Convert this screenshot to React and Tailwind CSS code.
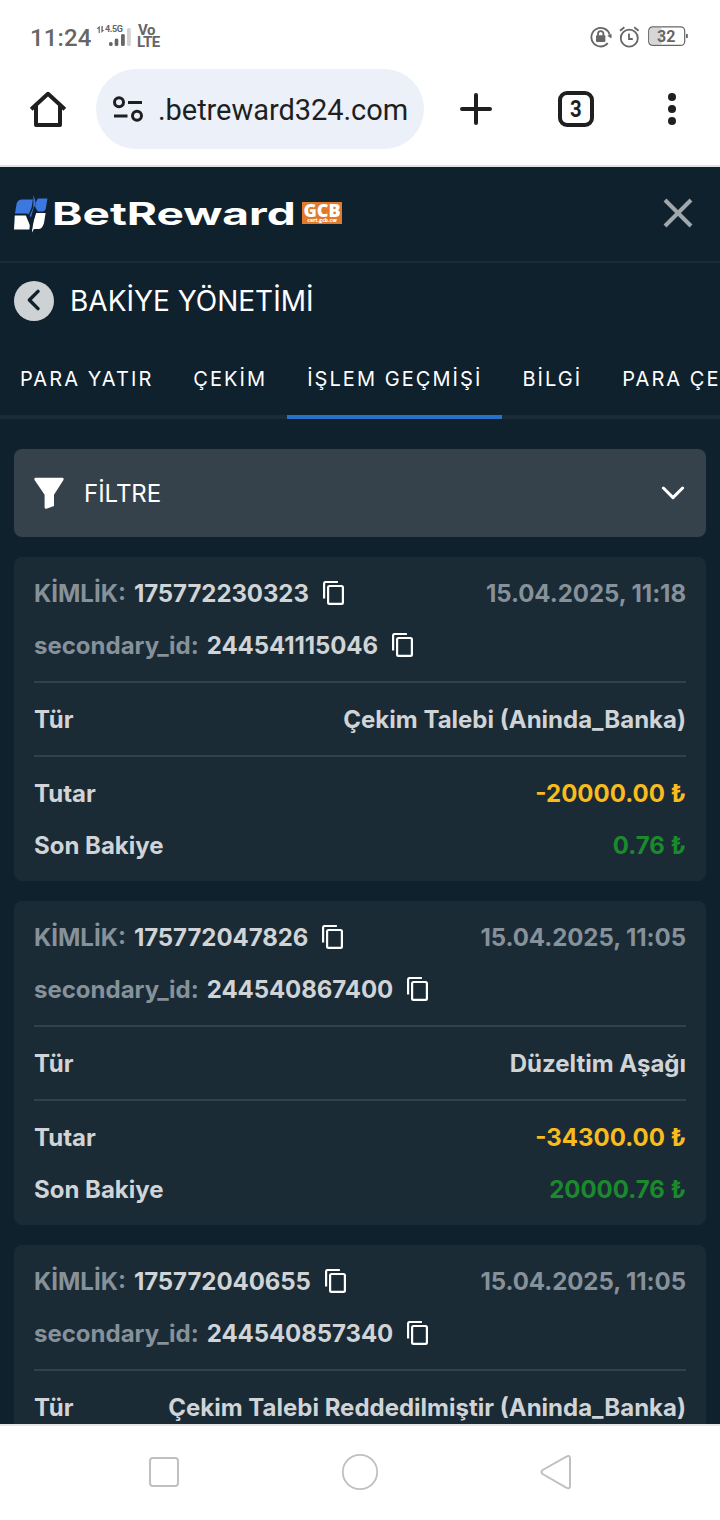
function StatusBar() {
  return (
    <div className="flex h-[69px] shrink-0 items-start pl-[30px] pr-[31px] text-[#666]">
      <span className="mt-[24px] w-[66px] whitespace-nowrap font-['Roboto'] text-[24px] font-medium leading-[28px] tracking-[0.1px]">11:24</span>
      <svg className="mt-[22px]" width="36" height="28" viewBox="0 0 36 28" fill="#666">
        <path d="M3.5 4 L0.5 6.8 H2.6 V11 H3.8 V4 Z M5.4 4 V11 L8.2 8 H6.8 V4 Z" />
        <text x="9" y="10.4" fontFamily="Roboto" fontWeight="700" fontSize="9" textLength="18">4.5G</text>
        <rect x="13" y="20" width="3.6" height="4" rx="1.5" />
        <rect x="18.7" y="16.5" width="3.6" height="7.5" rx="1.5" />
        <rect x="25" y="12" width="3.8" height="12" rx="1.5" />
        <rect x="31" y="6" width="3.8" height="18" rx="1.5" fill="#d2d2d2" />
      </svg>
      <div className="ml-[5px] mt-[24px] font-['Roboto'] text-[15px] font-bold leading-[12px]">
        <div className="pl-[1px] tracking-[-0.5px]">Vo</div>
        <div className="tracking-[-0.5px]">LTE</div>
      </div>
      <div className="ml-auto mt-[26px] flex items-start">
        <svg width="22" height="22" viewBox="0 0 22 22" fill="none" stroke="#666" strokeWidth="1.8">
          <path d="M17.8 17.2 A9.3 9.3 0 1 1 19.6 8.6" />
          <path d="M17.8 9.8 L21.2 12 V8.2 Z" strokeWidth="0.6" fill="#666" />
          <rect x="6" y="9.2" width="9.4" height="6.8" rx="1" fill="#666" stroke="none" />
          <path d="M8 10 V7.8 a2.7 2.7 0 0 1 5.4 0 V10" />
        </svg>
        <svg className="ml-[7px]" width="21" height="22" viewBox="0 0 21 22" fill="none" stroke="#666" strokeWidth="1.8">
          <circle cx="10.3" cy="12.2" r="8.5" />
          <path d="M10 7.4 V13 H13.8" />
          <path d="M1 4.8 L5.4 1.2 M15.2 1.2 L19.6 4.8" />
        </svg>
        <svg className="ml-[8px]" width="41" height="20" viewBox="0 0 41 20">
          <rect x="2" y="1.5" width="12" height="17" rx="3" fill="#d6d6d6" />
          <rect x="0.7" y="0.8" width="36" height="18.6" rx="4" fill="none" stroke="#666" strokeWidth="1.2" />
          <rect x="38" y="8" width="1.8" height="4" fill="#666" />
          <text x="9" y="16" fontFamily="Roboto" fontWeight="700" fontSize="16" textLength="18.5" fill="#666">32</text>
        </svg>
      </div>
    </div>
  );
}

function BrowserBar() {
  return (
    <div className="flex h-[98px] shrink-0 items-start border-b-2 border-[#dfe1e4] pl-[28px]">
      <svg className="mt-[20px]" width="40" height="40" viewBox="0 0 40 40" fill="none" stroke="#1f1f1f" strokeWidth="4" strokeLinejoin="round">
        <path d="M8 17 V36 H32 V17" />
        <path d="M3.2 20.2 L20 4.8 L36.8 20.2" />
      </svg>
      <div className="ml-[28px] flex h-[80px] w-[328px] items-center rounded-full bg-[#ebf0f9] pl-[16px]">
        <svg width="32" height="28" viewBox="0 0 32 28" fill="none" stroke="#1f1f1f" strokeWidth="3">
          <circle cx="7" cy="7.3" r="4.5" />
          <path d="M16 7.5 H30 M2 21 H15.5" />
          <circle cx="25" cy="20.8" r="4.5" />
        </svg>
        <span className="ml-[14px] mt-[2px] whitespace-nowrap font-['Roboto'] text-[29px] leading-[40px] tracking-[-0.05px] text-[#1f1f1f]">.betreward324.com</span>
      </div>
      <svg className="ml-[36px] mt-[24px]" width="32" height="32" viewBox="0 0 32 32" stroke="#1f1f1f" strokeWidth="4" strokeLinecap="round">
        <path d="M16 2 V30 M2 16 H30" />
      </svg>
      <div className="ml-[66px] mt-[22px] flex h-[36px] w-[36px] items-center justify-center rounded-[9px] border-4 border-[#1f1f1f] font-['Roboto'] text-[24px] font-bold leading-[28px] text-[#1f1f1f]">
        <span className="inline-block scale-x-[0.85]">3</span>
      </div>
      <svg className="ml-[74px] mt-[24px]" width="8" height="32" viewBox="0 0 8 32" fill="#1f1f1f" overflow="visible">
        <circle cx="4" cy="4" r="4" />
        <circle cx="4" cy="16" r="4" />
        <circle cx="4" cy="28" r="4" />
      </svg>
    </div>
  );
}

function SiteHeader() {
  return (
    <div className="flex h-[96px] shrink-0 items-center border-b-2 border-[#1b2c37] pl-[14px] pr-[27px]">
      <svg width="34" height="40" viewBox="0 0 34 40">
        <path d="M1 19.6 L2.6 9.5 Q4 5.5 8 5.5 H21.4 L19 22 L15.6 25 L13 19.6 Z" fill="#3b78e0" />
        <path d="M0.8 21.5 H11.8 L15.8 31 L15.4 35.4 H0 Z" fill="#fff" />
        <path d="M24 4.4 H33.4 L31.8 14.6 Q31.2 17.4 28.5 17.4 H23.8 L21 12.5 L22 8 Z" fill="#3b78e0" />
        <path d="M19.6 1 L21.6 9 L17.2 25 L16 22 Z" fill="#3b78e0" />
        <path d="M22.2 19 H31.6 L30 29 Q28.6 34.4 25 35 H20 L18 38.4 L18.4 30.6 Z" fill="#fff" />
        <path d="M19.6 1 L17.6 13.6 L14.8 20.2 L12.6 19.6 L16.6 33 L17.4 39 L21.6 17.2 L24 19.4 L20.2 11.8 L16.9 23.6 L15.8 21.4 L19.2 13.8 Z" fill="#10212e" />
      </svg>
      <div className="ml-[4px] h-[40px] w-[244px]">
        <span className="inline-block origin-left scale-x-[1.485] whitespace-nowrap font-['Inter'] text-[31px] font-bold leading-[40px] text-white">BetReward</span>
      </div>
      <div className="ml-[6px] flex h-[22px] w-[40px] -translate-y-px flex-col items-center justify-center bg-[#e17a2c] font-['Open_Sans'] font-extrabold text-white">
        <span className="text-[18px] leading-[15px]">GCB</span>
        <span className="text-[5px] leading-[5px]">cert.gcb.cw</span>
      </div>
      <svg className="ml-auto -translate-y-px" width="30" height="30" viewBox="0 0 30 30" stroke="#a0a7ad" strokeWidth="4">
        <path d="M2 2 L28 28 M28 2 L2 28" />
      </svg>
    </div>
  );
}

const tabs = [
  { label: "PARA YATIR" },
  { label: "ÇEKİM" },
  { label: "İŞLEM GEÇMİŞİ", active: true },
  { label: "BİLGİ" },
  { label: "PARA ÇEKME" },
];

function Tabs() {
  return (
    <div className="flex h-[80px] shrink-0 overflow-hidden">
      {tabs.map((t) => (
        <div
          key={t.label}
          className={
            "flex shrink-0 items-center whitespace-nowrap border-b-4 px-[20px] pt-[4px] text-[20px] leading-[24px] tracking-[2.06px] text-white " +
            (t.active ? "border-[#2672cb]" : "border-[#1b2c37]")
          }
        >
          {t.label}
        </div>
      ))}
    </div>
  );
}

function CopyIcon() {
  return (
    <svg className="ml-[14px] -translate-x-[0.5px] -translate-y-px" width="22" height="26" viewBox="0 0 22 26" fill="none" stroke="#fff" strokeWidth="2.2" strokeLinejoin="round">
      <path d="M15.4 2 H3 Q1.6 2 1.6 4 V18.6" />
      <rect x="5.6" y="6" width="14.8" height="17.8" rx="1.4" />
    </svg>
  );
}

function Row({ children }) {
  return <div className="flex h-[52px] items-center whitespace-nowrap pt-[2px]">{children}</div>;
}

const records = [
  { id: "175772230323", second: "244541115046", date: "15.04.2025, 11:18", type: "Çekim Talebi (Aninda_Banka)", amount: "-20000.00 ₺", balance: "0.76 ₺" },
  { id: "175772047826", second: "244540867400", date: "15.04.2025, 11:05", type: "Düzeltim Aşağı", amount: "-34300.00 ₺", balance: "20000.76 ₺" },
  { id: "175772040655", second: "244540857340", date: "15.04.2025, 11:05", type: "Çekim Talebi Reddedilmiştir (Aninda_Banka)", amount: "-20000.00 ₺", balance: "34300.76 ₺" },
];

function Card({ r }) {
  return (
    <div className="mb-[20px] shrink-0 rounded-[8px] bg-[#1b2b36] px-[20px] text-[24px] font-bold text-[#d0d4d7]">
      <div className="border-b-2 border-[#31414b] py-[10px]">
        <Row>
          <span className="mr-[8px] text-[#87919a]">KİMLİK:</span>
          <span className="tracking-[-0.08px]">{r.id}</span>
          <CopyIcon />
          <span className="ml-auto tracking-[-0.05px] text-[#87919a]">{r.date}</span>
        </Row>
        <Row>
          <span className="mr-[8px] text-[#87919a]">secondary_id:</span>
          <span className="tracking-[-0.08px]">{r.second}</span>
          <CopyIcon />
        </Row>
      </div>
      <div className="border-b-2 border-[#31414b] py-[10px]">
        <Row>
          <span>Tür</span>
          <span className="ml-auto">{r.type}</span>
        </Row>
      </div>
      <div className="py-[10px]">
        <Row>
          <span>Tutar</span>
          <span className="ml-auto text-[#f8bc1c]">{r.amount}</span>
        </Row>
        <Row>
          <span>Son Bakiye</span>
          <span className="ml-auto text-[#1a8a2d]">{r.balance}</span>
        </Row>
      </div>
    </div>
  );
}

function NavBar() {
  return (
    <div className="flex h-[96px] shrink-0 items-center justify-center gap-[160px] border-t-2 border-[#e3e5e6] bg-white">
      <svg width="36" height="36" viewBox="0 0 36 36" fill="none" stroke="#c0c0c0" strokeWidth="2">
        <rect x="4" y="3" width="28" height="28" rx="3" />
      </svg>
      <svg width="36" height="36" viewBox="0 0 36 36" fill="none" stroke="#c0c0c0" strokeWidth="1.8" overflow="visible">
        <circle cx="18" cy="17" r="17.2" />
      </svg>
      <svg width="36" height="36" viewBox="0 0 36 36" fill="none" stroke="#c0c0c0" strokeWidth="2" strokeLinejoin="round">
        <path d="M4.6 15 Q2.4 17 4.6 19 L28.2 32.6 Q32 34.4 32 31 V3.2 Q32 -0.2 28.4 1.6 Z" />
      </svg>
    </div>
  );
}

export default function App() {
  return (
    <div className="flex h-[1520px] w-[720px] flex-col overflow-hidden bg-white font-['Inter',sans-serif]">
      <StatusBar />
      <BrowserBar />
      <div className="flex min-h-0 flex-1 flex-col overflow-hidden bg-[#10212e]">
        <SiteHeader />
        <div className="flex h-[76px] shrink-0 items-center pl-[14px]">
          <div className="flex h-[40px] w-[40px] items-center justify-center rounded-full bg-[#cfd2d5]">
            <svg className="-translate-y-px" width="14" height="22" viewBox="0 0 14 22" fill="none" stroke="#10212e" strokeWidth="3.4" strokeLinecap="round" strokeLinejoin="round">
              <path d="M11 2.4 L2.4 11 L11 19.6" />
            </svg>
          </div>
          <span className="ml-[16px] text-[28px] leading-[34px] text-white">BAKİYE YÖNETİMİ</span>
        </div>
        <Tabs />
        <div className="mx-[14px] mt-[30px] flex h-[88px] shrink-0 items-center rounded-[8px] bg-[#35424c] pl-[20px] pr-[21px]">
          <svg width="30" height="32" viewBox="0 0 30 32" fill="#fff">
            <path d="M1.2 0.8 H28.8 Q30 1.1 29.6 2.7 L20 17.8 V29 L12.4 31.8 Q10.6 32 10.6 30.2 V17.8 L0.4 2.7 Q0 1.1 1.2 0.8 Z" />
          </svg>
          <span className="ml-[20px] mt-[1px] text-[24px] text-white">FİLTRE</span>
          <svg className="ml-auto" width="24" height="14" viewBox="0 0 24 14" fill="none" stroke="#fff" strokeWidth="3" strokeLinecap="round" strokeLinejoin="round">
            <path d="M2.4 2 L12 11.6 L21.6 2" />
          </svg>
        </div>
        <div className="mt-[20px] flex flex-col px-[14px]">
          {records.map((r) => (
            <Card key={r.id} r={r} />
          ))}
        </div>
      </div>
      <NavBar />
    </div>
  );
}
